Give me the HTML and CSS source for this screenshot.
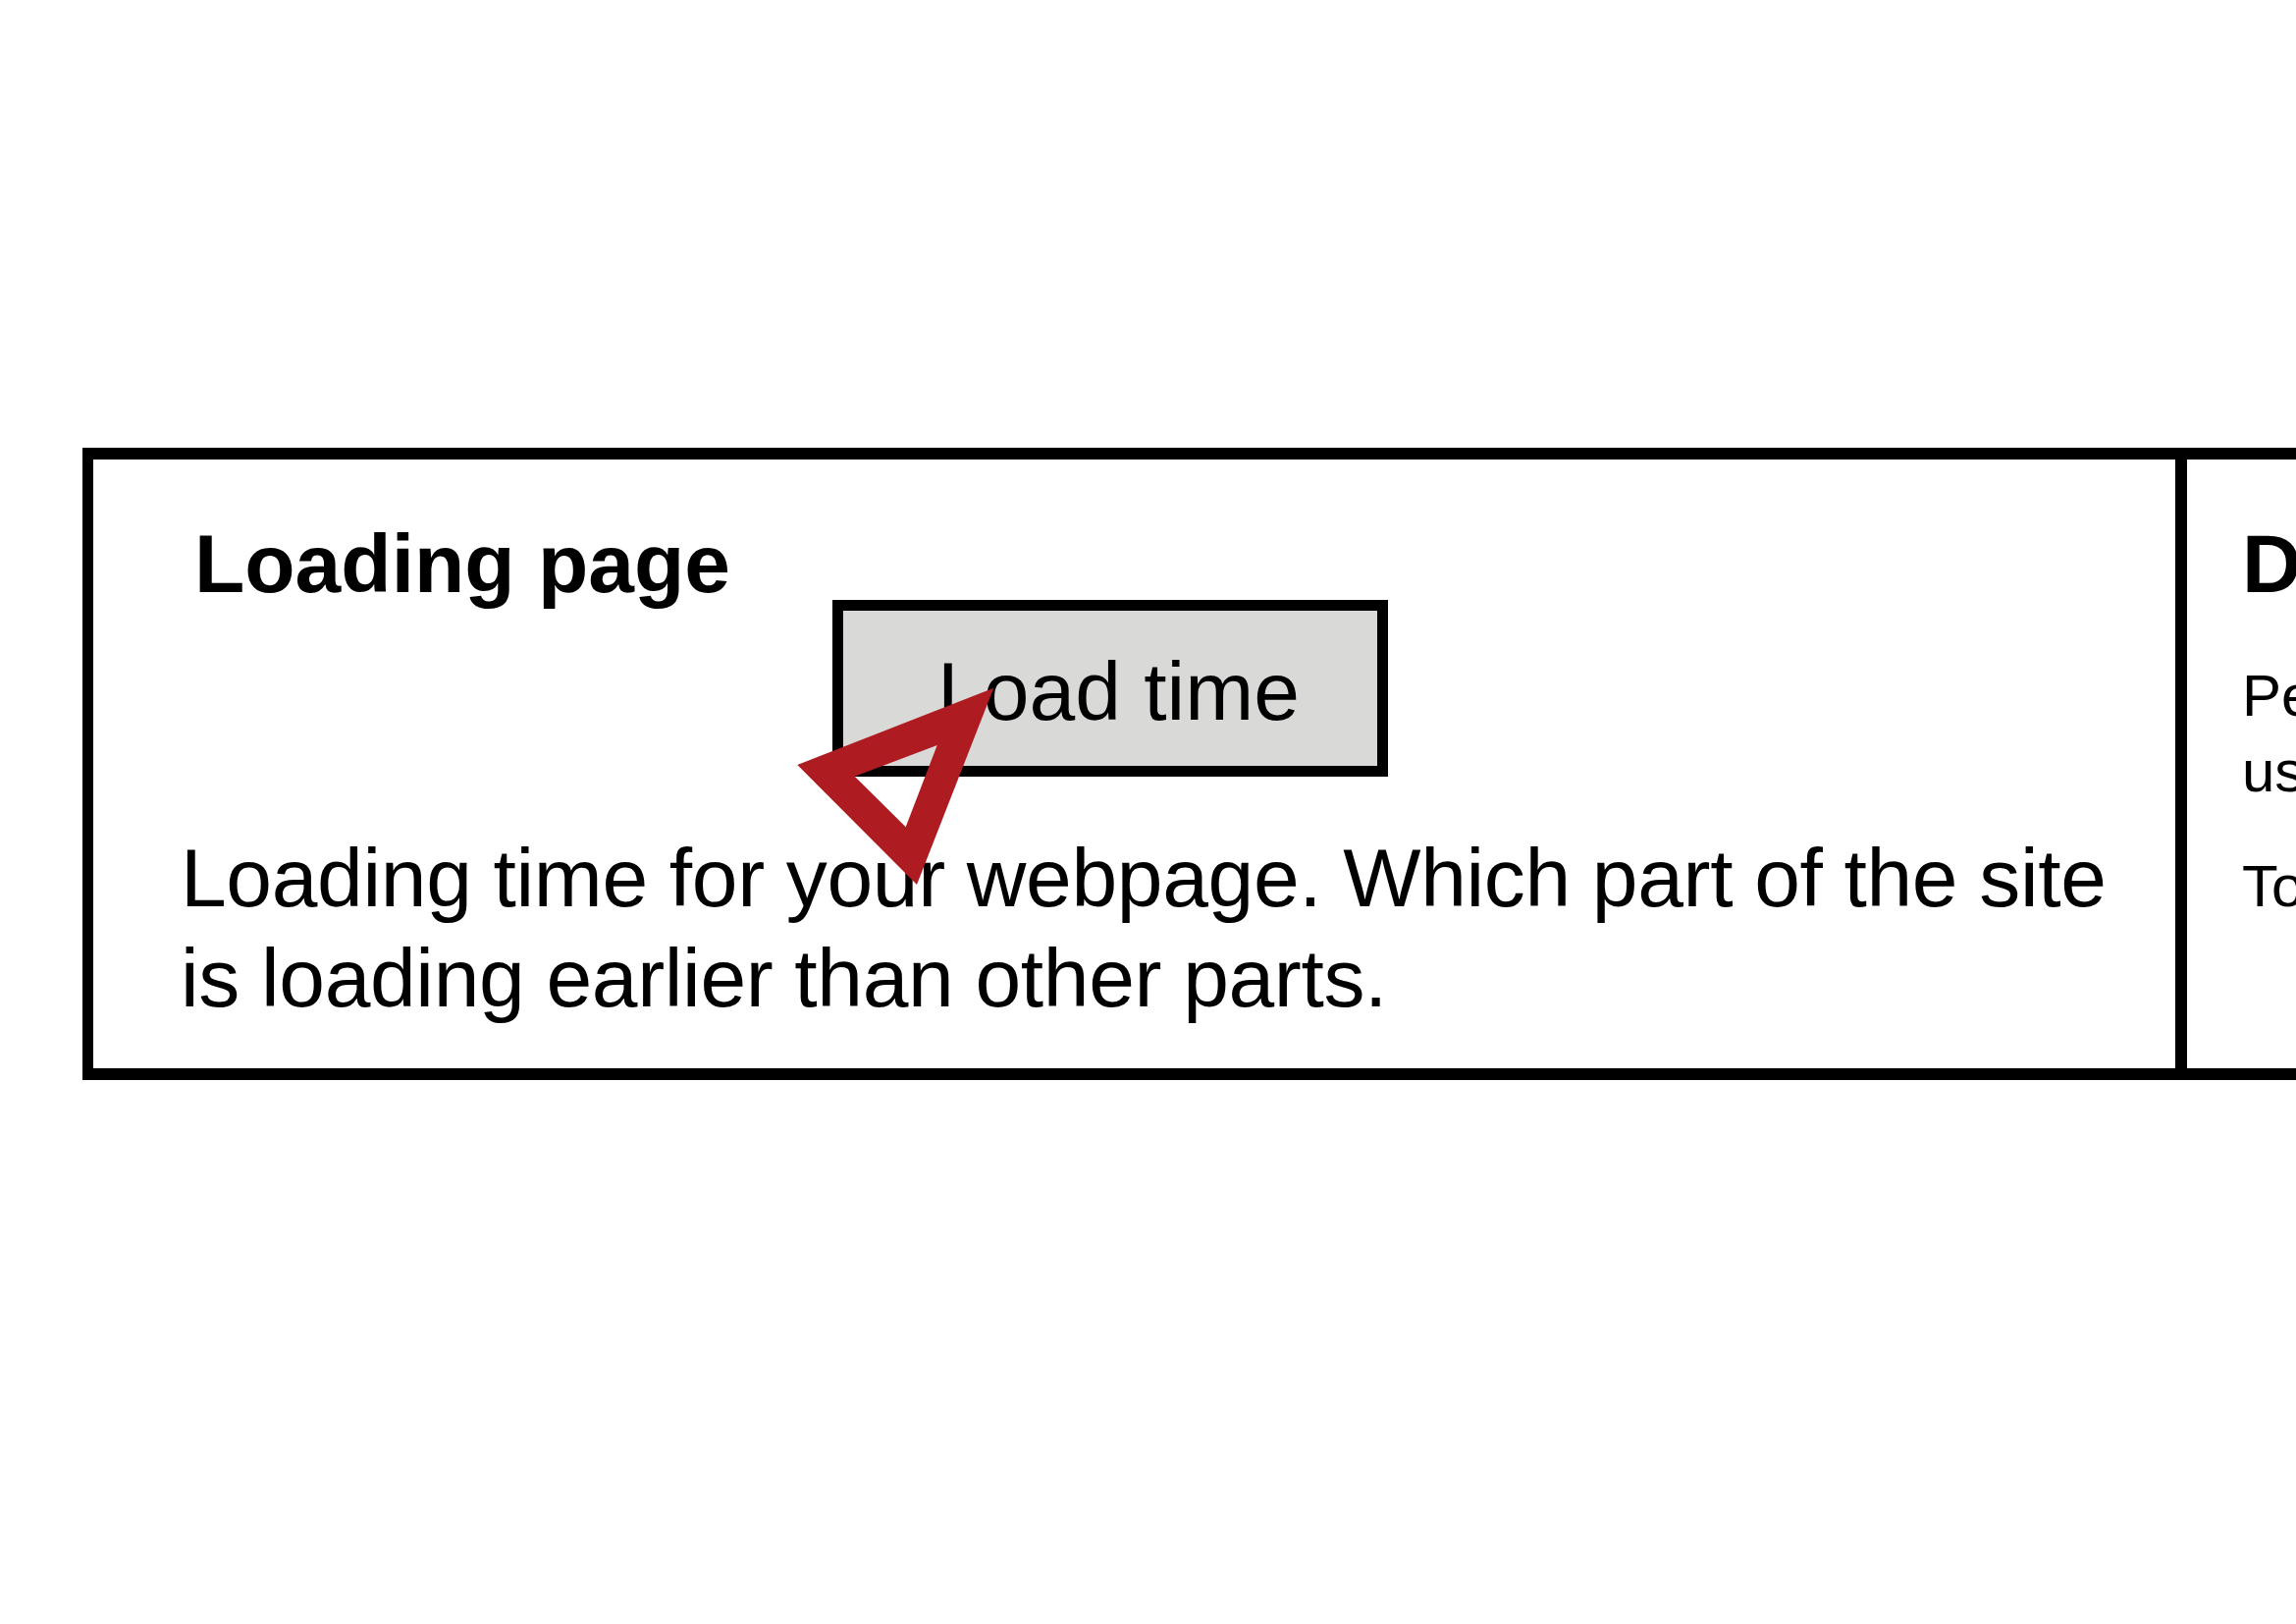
FILE: index.html
```html
<!DOCTYPE html>
<html lang="en">
<head>
<meta charset="utf-8">
<title>Loading page</title>
<link rel="stylesheet" href="styles.css">
</head>
<body>
<div class="panel">
  <section class="cell cell-main">
    <h2 class="cell-title title-main">Loading page</h2>
    <button class="btn" type="button">Load time</button>
    <p class="cell-text">Loading time for your webpage. Which part of the site is loading earlier than other parts.</p>
    <svg class="pointer" width="230" height="230" viewBox="0 0 230 230" aria-hidden="true">
      <path fill-rule="evenodd" d="M212.3 10.7 L12.3 89 L134 211 Z M154.7 69 L70.7 100.7 L122.7 152.3 Z"/>
    </svg>
  </section>
  <section class="cell cell-side">
    <h2 class="cell-title">Data usage</h2>
    <p class="side-text">Performance of the page for real users over the last month.</p>
    <p class="side-text side-text-next">Total data used by each page.</p>
  </section>
</div>
</body>
</html>
```

FILE: styles.css
```css
html, body {
  margin: 0;
  padding: 0;
  background: #ffffff;
  overflow: hidden;
}

body {
  font-family: "Liberation Sans", Arial, sans-serif;
  color: #000000;
  padding: 456px 0 0 84px;
}

.panel {
  display: flex;
  width: max-content;
  border: 12px solid #000000;
  border-left-width: 11px;
}

.cell {
  flex: none;
  box-sizing: border-box;
  position: relative;
  padding-top: 71px;
}

.cell-main {
  width: 2121px;
  padding-left: 89px;
  padding-bottom: 41px;
}

.cell-side {
  width: 1100px;
  border-left: 12px solid #000000;
  padding-left: 56px;
}

.cell-title {
  margin: 0;
  font-size: 84px;
  font-weight: 700;
  line-height: 70px;
}

.title-main {
  margin-left: 14px;
}

.btn {
  display: block;
  margin: 2px 0 0 664px;
  box-sizing: content-box;
  height: 152px;
  padding: 6px 79px 0 96px;
  border: 11px solid #000000;
  background: #d9d9d7;
  font-family: "Liberation Sans", Arial, sans-serif;
  font-size: 84px;
  font-weight: 400;
  line-height: 152px;
  color: #000000;
  border-radius: 0;
}

.cell-text {
  margin: 52px 0 0 0;
  width: 2030px;
  font-size: 84px;
  line-height: 102px;
  letter-spacing: -0.35px;
  word-spacing: -1px;
}

.side-text {
  margin: 61px 0 0 0;
  width: 900px;
  font-size: 60px;
  line-height: 77px;
}

.side-text-next {
  margin-top: 40px;
}

.pointer {
  position: absolute;
  left: 705px;
  top: 222px;
  fill: #ae1c22;
}
```
